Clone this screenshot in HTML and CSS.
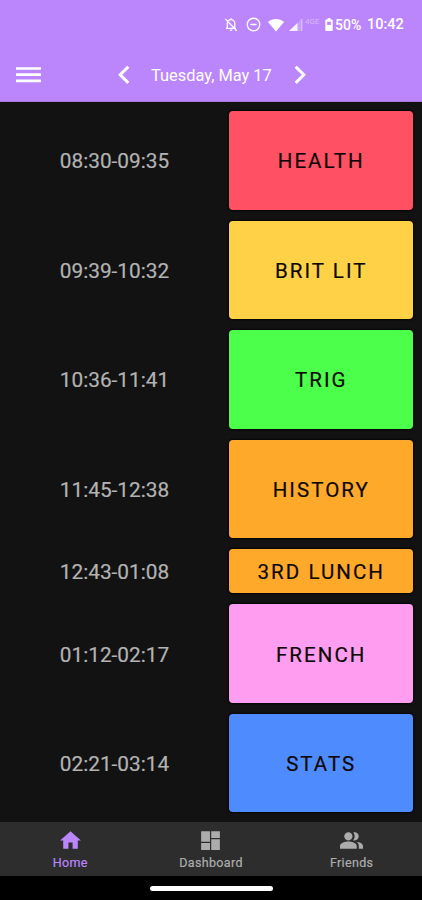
FILE: index.html
```html
<!DOCTYPE html>
<html lang="en">
<head>
<meta charset="utf-8">
<title>Schedule</title>
<link rel="stylesheet" href="styles.css">
</head>
<body>
<div class="app">
  <header class="header">
    <div class="status">
      <svg class="bell" viewBox="0 0 24 24"><path d="M6 17V10a6 6 0 0 1 12 0v7M4 18h16M10 21h4M12 2v3M3 3l18 19" fill="none" stroke="currentColor" stroke-width="2"/></svg>
      <svg class="dnd" viewBox="0 0 24 24"><circle cx="12" cy="12" r="10" fill="none" stroke="currentColor" stroke-width="2.2"/><path d="M7 12h10" stroke="currentColor" stroke-width="2.4"/></svg>
      <svg class="wifi" viewBox="0 0 16 14"><path d="M0 4C4 0 12 0 16 4L8 13.500Z" fill="currentColor"/></svg>
      <svg class="signal" viewBox="0 0 14 14"><path d="M0 13L13.500 0V13Z" fill="currentColor" opacity=".2"/><path d="M0 13L8.500 5V13Z" fill="currentColor" opacity=".85"/><path d="M12.800 1v12" stroke="currentColor" opacity=".4"/></svg>
      <span class="network">4GE</span>
      <svg class="battery" viewBox="0 0 8 14"><path d="M2.500 0h3v1.500H7q1 0 1 1V13q0 1-1 1H1q-1 0-1-1V2.500q0-1 1-1h1.500Z" fill="currentColor"/><path d="M2 4h4v3.500H2Z" fill="#bb86fc"/></svg>
      <span class="percent">50%</span>
      <span class="clock">10:42</span>
    </div>
    <div class="toolbar">
      <svg class="menu" viewBox="0 0 25 16"><path d="M0 1.500h25M0 7.700h25M0 13.900h25" stroke="currentColor" stroke-width="2.700"/></svg>
      <div class="picker">
        <svg class="arrow" viewBox="0 0 12 20"><path d="M10.300 1.700L2.200 9.800l8.100 8.100" fill="none" stroke="currentColor" stroke-width="3"/></svg>
        <span class="date">Tuesday, May 17</span>
        <svg class="arrow" viewBox="0 0 12 20"><path d="M1.700 1.700l8.100 8.100-8.100 8.100" fill="none" stroke="currentColor" stroke-width="3"/></svg>
      </div>
    </div>
  </header>
  <main class="schedule">
    <div class="time">08:30-09:35</div><div class="card red">HEALTH</div>
    <div class="time">09:39-10:32</div><div class="card yellow">BRIT LIT</div>
    <div class="time">10:36-11:41</div><div class="card green">TRIG</div>
    <div class="time">11:45-12:38</div><div class="card orange">HISTORY</div>
    <div class="time">12:43-01:08</div><div class="card orange">3RD LUNCH</div>
    <div class="time">01:12-02:17</div><div class="card pink">FRENCH</div>
    <div class="time">02:21-03:14</div><div class="card blue">STATS</div>
  </main>
  <nav class="tabs">
    <div class="tab active">
      <svg viewBox="0 0 24 24"><path d="M10 20v-6h4v6h5v-8h3L12 3 2 12h3v8z" fill="currentColor"/></svg>
      <span>Home</span>
    </div>
    <div class="tab">
      <svg viewBox="0 0 24 24"><path d="M3 13.300h8.500V3H3v10.300zm0 7.700h8.500v-6.500H3V21zm9.700 0H21V10.700h-8.300V21zm0-18v6.500H21V3h-8.300z" fill="currentColor"/></svg>
      <span>Dashboard</span>
    </div>
    <div class="tab">
      <svg viewBox="0 0 24 24"><path d="M16.670 13.130C18.040 14.060 19 15.320 19 17v3h4v-3c0-2.180-3.570-3.470-6.330-3.870zM15 12c2.210 0 4-1.790 4-4s-1.790-4-4-4c-.47 0-.91.1-1.330.24C14.500 5.270 15 6.580 15 8s-.5 2.730-1.330 3.760c.42.14.86.24 1.330.24zM9 12c2.210 0 4-1.790 4-4s-1.790-4-4-4-4 1.790-4 4 1.790 4 4 4zm0 1c-2.670 0-8 1.340-8 4v3h16v-3c0-2.660-5.330-4-8-4z" fill="currentColor"/></svg>
      <span>Friends</span>
    </div>
  </nav>
  <div class="system"><div class="handle"></div></div>
</div>
</body>
</html>
```
FILE: styles.css
```css
* { box-sizing: border-box; }
body { margin: 0; background: #121212; font-family: Roboto, sans-serif; }
svg { display: block; flex: none; }
.app { width: 422px; height: 900px; display: flex; flex-direction: column; overflow: hidden; }
.header { height: 102px; background: #bb86fc; color: #fff; border-bottom: 1px solid #a377dc; }
.status { height: 48px; padding: 1px 0 0 223px; display: flex; align-items: center; font-size: 14px; font-weight: 500; white-space: nowrap; }
.bell { width: 16px; height: 15px; }
.dnd { width: 15px; height: 15px; margin-left: 7px; }
.wifi { width: 16px; height: 14px; margin-left: 7px; }
.signal { width: 14px; height: 14px; margin-left: 5px; }
.network { width: 16px; margin-left: 2px; font-size: 8px; font-weight: 400; opacity: .4; transform: translateY(-3px); }
.battery { width: 8px; height: 13px; margin-left: 4px; }
.percent { width: 28px; margin-left: 2px; }
.clock { margin-left: 4px; font-size: 14.500px; }
.toolbar { height: 54px; display: flex; align-items: center; padding: 0 0 1px 16px; }
.menu { width: 25px; height: 16px; }
.picker { margin-left: 77px; display: flex; align-items: center; }
.arrow { width: 12px; height: 20px; }
.date { width: 121px; margin: 2px 22px 0 21px; font-size: 16.400px; white-space: nowrap; }
.schedule { height: 720px; padding: 9.300px 9.500px 0 0; display: grid; grid-template-columns: 229px 1fr; grid-template-rows: repeat(4, 98.400px) 44px repeat(2, 98.400px); row-gap: 11.100px; align-content: start; }
.time { display: flex; align-items: center; justify-content: center; color: #b3b3b3; font-size: 20.800px; padding-top: 2px; -webkit-text-stroke: .2px #b3b3b3; }
.card { display: flex; align-items: center; justify-content: center; border-radius: 4px; color: #0d0805; font-size: 20.500px; letter-spacing: 2.050px; padding: 2px 0 0 1px; box-shadow: 0 0 2px 1px #050505; -webkit-text-stroke: .2px #0d0805; }
.red { background: #ff5064; }
.yellow { background: #ffd147; }
.green { background: #4bff4b; }
.orange { background: #ffa92b; }
.pink { background: #ff9df0; }
.blue { background: #4d8bff; }
.tabs { height: 54px; display: grid; grid-template-columns: repeat(3, 1fr); background: #2d2d2d; }
.tab { display: flex; flex-direction: column; align-items: center; padding-top: 6px; color: #acacac; font-size: 12.500px; letter-spacing: .35px; line-height: 16px; }
.tab svg { width: 25px; height: 25px; margin-bottom: 2px; }
.tab span { -webkit-text-stroke: .2px currentColor; }
.active { color: #bb86fc; }
.system { height: 24px; background: #000; padding-top: 10px; }
.handle { width: 123px; height: 5px; margin: 0 auto; border-radius: 3px; background: #fff; }
```
